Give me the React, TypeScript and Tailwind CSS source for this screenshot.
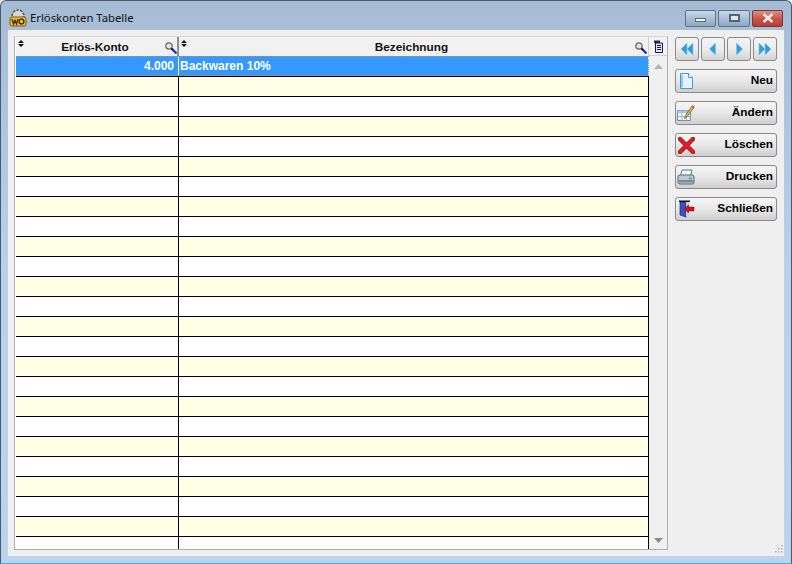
import React from "react";

const rowCount = 24;

const SortArrows = () => (
  <svg width="6" height="7" viewBox="0 0 6 7" className="shrink-0">
    <path d="M3 0 L6 3 H0 Z M3 7 L0 4 H6 Z" fill="#111" />
  </svg>
);

const Lens = () => (
  <svg width="12" height="12" viewBox="0 0 12 12" className="shrink-0">
    <circle cx="4" cy="4" r="3.2" fill="#e2e2e2" stroke="#666" strokeWidth="1.2" />
    <path d="M6.5 6.5 L11.5 11.5" stroke="#1420c8" strokeWidth="2" />
    <path d="M6.5 6.5 L8 8" stroke="#222" strokeWidth="2" />
  </svg>
);

const NavButton = ({ dir, double }: { dir: "l" | "r"; double?: boolean }) => (
  <button className="w-[24px] h-[24px] rounded-[3px] border border-[#8a8a8a] bg-gradient-to-b from-[#f4f4f4] via-[#ececec] to-[#d2d2d2] flex items-center justify-center">
    <svg width="16" height="14" viewBox="0 0 16 14">
      {dir === "l" ? (
        double ? (
          <path d="M8 1 V13 L2 7 Z M14 1 V13 L8 7 Z" fill="#2f9fd8" stroke="#7cc6ea" strokeWidth="0.6" />
        ) : (
          <path d="M10.5 1 V13 L4.5 7 Z" fill="#2f9fd8" stroke="#7cc6ea" strokeWidth="0.6" />
        )
      ) : double ? (
        <path d="M2 1 V13 L8 7 Z M8 1 V13 L14 7 Z" fill="#2f9fd8" stroke="#7cc6ea" strokeWidth="0.6" />
      ) : (
        <path d="M5.5 1 V13 L11.5 7 Z" fill="#2f9fd8" stroke="#7cc6ea" strokeWidth="0.6" />
      )}
    </svg>
  </button>
);

const NewIcon = () => (
  <svg width="13" height="16" viewBox="0 0 13 16">
    <path d="M.5 .5 H8.5 L12.5 4.5 V15.5 H.5 Z" fill="#e4f3fb" stroke="#3f9bd4" />
    <path d="M8.5 .5 V4.5 H12.5" fill="#fff" stroke="#3f9bd4" />
    <path d="M2 2 V14.5" stroke="#8fd0f2" strokeWidth="2" />
  </svg>
);

const EditIcon = () => (
  <svg width="18" height="17" viewBox="0 0 18 17">
    <path d="M.5 5.5 H13.5 V15.5 H.5 Z" fill="#f2f6fb" stroke="#6f8bb0" />
    <path d="M.5 5.5 H13.5 V8 H.5 Z" fill="#a9c2e4" />
    <path d="M5 5.5 V15.5 M9.5 5.5 V15.5 M.5 11.5 H13.5" stroke="#9fb4d0" />
    <path d="M8 11 L15 1 L17 2.5 L10 12 L7.5 13.5 Z" fill="#d8b35a" stroke="#6f5a2a" strokeWidth="0.7" />
    <path d="M15 1 L17 2.5" stroke="#b8604a" strokeWidth="1.6" />
  </svg>
);

const DeleteIcon = () => (
  <svg width="17" height="17" viewBox="0 0 17 17">
    <path d="M2 2 L15 15 M15 2 L2 15" stroke="#8e1414" strokeWidth="4.4" strokeLinecap="round" />
    <path d="M2 2 L15 15 M15 2 L2 15" stroke="#dc2020" strokeWidth="3" strokeLinecap="round" />
  </svg>
);

const PrintIcon = () => (
  <svg width="18" height="16" viewBox="0 0 18 16">
    <path d="M5 1 H15 L13.5 7 H3.5 Z" fill="#f4f6f8" stroke="#66727e" />
    <path d="M1 7 Q1 6 3 6 H15 Q17 6 17 8 V14 Q17 15 15 15 H3 Q1 15 1 13 Z" fill="#bcc8d4" stroke="#5c6873" />
    <path d="M1.5 11 H16.5 V13.5 H1.5 Z" fill="#7f8c99" />
    <rect x="12" y="8.5" width="2.5" height="2" fill="#27c24c" />
  </svg>
);

const CloseIcon = () => (
  <svg width="17" height="18" viewBox="0 0 17 18">
    <path d="M1 .5 H12 V2 H1 Z" fill="#111" />
    <path d="M2 2 H8 V17 L2 15 Z" fill="#3c4fc0" stroke="#1b2580" strokeWidth="0.7" />
    <path d="M8 2 H11 V16 H8 Z" fill="#c4d0f0" />
    <path d="M16 7 H10.5 V4.8 L6.5 9 L10.5 13 V11 H16 Z" fill="#d8141a" stroke="#700" strokeWidth="0.5" />
  </svg>
);

const ActionButton = ({ icon, label }: { icon: React.ReactNode; label: string }) => (
  <button className="w-[102px] h-[24px] rounded-[3px] border border-[#8a8a8a] bg-gradient-to-b from-[#f6f6f6] via-[#e8e8e8] to-[#cfcfcf] flex items-center justify-between pl-[1px] pr-[3px]">
    <span className="w-[18px] flex items-center justify-center">{icon}</span>
    <span className="text-[11.8px] font-bold text-black">{label}</span>
  </button>
);

export default function App() {
  return (
    <div
      className="w-[792px] h-[564px] flex flex-col overflow-hidden bg-gradient-to-b from-[#a5bcd4] via-[#b9d1ea] to-[#bcd3ec] border border-[#4a5a6a] border-b-[#27bfd8] rounded-t-[6px]"
      style={{ fontFamily: '"Liberation Sans", Arial, sans-serif' }}
    >
      {/* title bar */}
      <div className="h-[29px] shrink-0 flex items-center pt-[5px] pl-[8px] pr-[8px]">
        <svg width="18" height="18" viewBox="0 0 18 18" className="shrink-0">
          <circle cx="9" cy="7" r="6" fill="#d6d6d6" stroke="#555" strokeWidth="1.6" strokeDasharray="2.5 1.2" />
          <rect x="1" y="8" width="16" height="9" rx="2" fill="#f2c22e" stroke="#7a5a10" />
          <path d="M3 10 L4.5 15 L6 11.5 L7.5 15 L9 10" fill="none" stroke="#3d2a05" strokeWidth="1.3" />
          <circle cx="12.5" cy="12.5" r="2.4" fill="none" stroke="#3d2a05" strokeWidth="1.4" />
        </svg>
        <span className="ml-[3px] text-[11.3px] text-[#111]" style={{ fontFamily: '"Noto Sans", sans-serif' }}>Erlöskonten Tabelle</span>
        <div className="ml-auto flex gap-[2px]">
          <button className="w-[31px] h-[17px] rounded-[2px] border border-[#5f7184] bg-gradient-to-b from-[#c9d8e8] via-[#a8bfd6] to-[#8fa9c4] flex items-center justify-center">
            <span className="w-[11px] h-[4px] mt-[4px] bg-[#f4f4f4] border border-[#5a6a7a]" />
          </button>
          <button className="w-[32px] h-[17px] rounded-[2px] border border-[#5f7184] bg-gradient-to-b from-[#c9d8e8] via-[#a8bfd6] to-[#8fa9c4] flex items-center justify-center">
            <span className="w-[11px] h-[8px] bg-[#dfe6ec] border-2 border-[#56626e]" />
          </button>
          <button className="w-[31px] h-[17px] rounded-[2px] border border-[#7a3a34] bg-gradient-to-b from-[#dd8f85] via-[#c9574b] to-[#b83c30] flex items-center justify-center">
            <svg width="12" height="10" viewBox="0 0 12 10">
              <path d="M1.5 1 L10.5 9 M10.5 1 L1.5 9" stroke="#f4ece8" strokeWidth="2.6" />
            </svg>
          </button>
        </div>
      </div>

      {/* client area */}
      <div className="relative mx-[7px] h-[526px] bg-[#efefef] flex gap-[7px] pt-[6px] pl-[6px]">
        {/* table */}
        <div className="w-[654px] h-[514px] border border-[#b0b0b0] border-t-[#d8d8d8] flex overflow-hidden bg-white">
          <div className="ml-[1px] w-[633px] flex flex-col overflow-hidden">
            <div className="h-[19px] shrink-0 flex bg-[#f1f1f1]">
              <div className="w-[163px] pl-[2px] flex border-r-2 border-[#8f8f8f]">
                <div className="mt-[3px]"><SortArrows /></div>
                <span className="flex-1 pl-[1px] text-center text-[11.8px] font-bold leading-[21px] text-[#111]">Erlös-Konto</span>
                <div className="mt-[5px]"><Lens /></div>
              </div>
              <div className="flex-1 pl-[2px] pr-[1px] flex border-r border-[#d0d0d0]">
                <div className="mt-[3px]"><SortArrows /></div>
                <span className="flex-1 pl-[1px] text-center text-[11.8px] font-bold leading-[21px] text-[#111]">Bezeichnung</span>
                <div className="mt-[5px]"><Lens /></div>
              </div>
            </div>
            <div className="h-[21px] shrink-0 border-b border-black">
              <div className="flex h-[20px] bg-[#3399ff] border-y border-dotted border-y-[#c89050] text-white text-[12px] font-bold">
                <div className="w-[163px] pr-[4px] text-right leading-[19px] border-r border-white">4.000</div>
                <div className="flex-1 pl-[1px] leading-[19px] border-r border-dotted border-white">Backwaren 10%</div>
              </div>
            </div>
            {Array.from({ length: rowCount }).map((_, i) => (
              <div
                key={i}
                className={`flex h-[20px] shrink-0 border-b border-black ${i % 2 === 0 ? "bg-[#ffffe6]" : "bg-white"}`}
              >
                <div className="w-[163px] border-r border-black" />
                <div className="flex-1 border-r border-black" />
              </div>
            ))}
          </div>
          <div className="flex-1 flex flex-col items-center bg-[#f0f0f0]">
            <div className="h-[19px] w-full flex items-center justify-center bg-[#f3f3f3] border-b border-[#d0d0d0]">
              <svg width="11" height="13" viewBox="0 0 11 13">
                <path d="M1 .5 H7 V3 H1 Z" fill="#333" />
                <path d="M2.5 3 H9.5 V12.5 H2.5 Z" fill="#dfe6f4" stroke="#14145a" />
                <path d="M4 5.5 H8 M4 7.5 H8 M4 9.5 H8" stroke="#14145a" />
              </svg>
            </div>
            <svg width="9" height="5" viewBox="0 0 9 5" className="mt-[8px]"><path d="M4.5 0 L9 5 H0 Z" fill="#b4b4b4" /></svg>
            <svg width="9" height="5" viewBox="0 0 9 5" className="mt-auto mb-[6px]"><path d="M4.5 5 L9 0 H0 Z" fill="#8c8c8c" /></svg>
          </div>
        </div>

        {/* side buttons */}
        <div className="w-[102px] flex flex-col mt-[1px]">
          <div className="flex gap-[2px]">
            <NavButton dir="l" double />
            <NavButton dir="l" />
            <NavButton dir="r" />
            <NavButton dir="r" double />
          </div>
          <div className="mt-[8px] flex flex-col gap-[8px]">
            <ActionButton icon={<NewIcon />} label="Neu" />
            <ActionButton icon={<EditIcon />} label="Ändern" />
            <ActionButton icon={<DeleteIcon />} label="Löschen" />
            <ActionButton icon={<PrintIcon />} label="Drucken" />
            <ActionButton icon={<CloseIcon />} label="Schließen" />
          </div>
        </div>

        {/* size grip */}
        <svg width="10" height="10" viewBox="0 0 10 10" className="absolute right-[1px] bottom-[2px]">
          <path d="M8 1h1.5v1.5H8z M5 4h1.5v1.5H5z M8 4h1.5v1.5H8z M2 7h1.5v1.5H2z M5 7h1.5v1.5H5z M8 7h1.5v1.5H8z" fill="#b0b0b0" />
        </svg>
      </div>
    </div>
  );
}
